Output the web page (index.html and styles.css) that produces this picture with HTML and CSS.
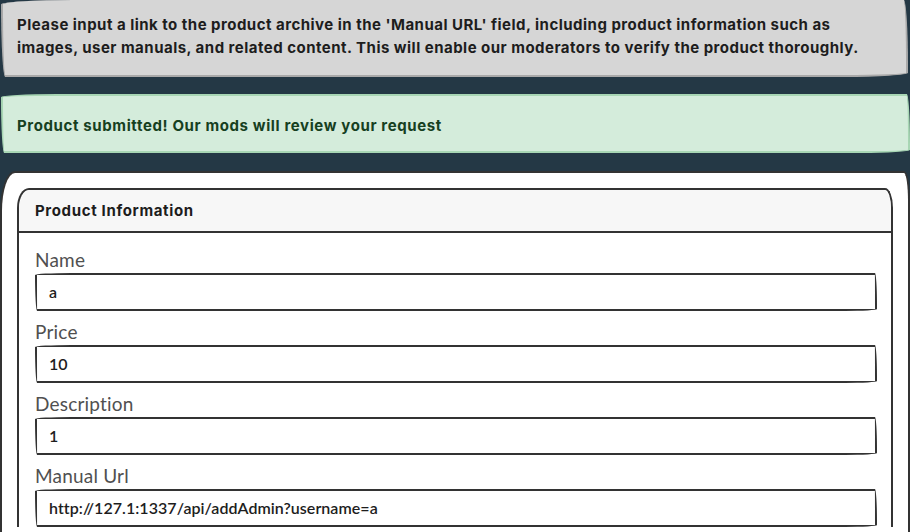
FILE: index.html
```html
<!DOCTYPE html>
<html>
<head>
<meta charset="utf-8">
<link rel="stylesheet" href="styles.css">
</head>
<body>
  <div class="alert alert-info">Please input a link to the product archive in the 'Manual URL' field, including product information such as images, user manuals, and related content. This will enable our moderators to verify the product thoroughly.</div>
  <div class="alert alert-success">Product submitted! Our mods will review your request</div>
  <div class="paper">
    <div class="card">
      <div class="card-header">Product Information</div>
      <div class="card-body">
        <label class="label">Name</label>
        <div class="input">a</div>
        <label class="label">Price</label>
        <div class="input">10</div>
        <label class="label">Description</label>
        <div class="input">1</div>
        <label class="label">Manual Url</label>
        <div class="input">http://127.1:1337/api/addAdmin?username=a</div>
      </div>
    </div>
  </div>
</body>
</html>
```

FILE: styles.css
```css
html, body {
  margin: 0;
  padding: 0;
  background: #243845;
  height: 100%;
  overflow: hidden;
}
body {
  font-family: "Inter", "DejaVu Sans", sans-serif;
}
.alert {
  font-weight: 700;
  font-size: 15px;
  line-height: 23px;
  letter-spacing: 0.48px;
  color: #1d1d1d;
  border-radius: 255px 15px 225px 15px / 15px 225px 15px 255px;
}
.alert-info {
  background: #d6d6d6;
  border: 2px solid #a9a9a9;
  border-top: none;
  margin: 0 2px 0 1px;
  padding: 13px 32px 16px 14px;
}
.alert-success {
  background: #d4ecdb;
  border: 2px solid #a8d6b4;
  color: #16401f;
  letter-spacing: 0.62px;
  margin: 17px 0 0 1px;
  padding: 18px 16px 14px 14px;
}
.paper {
  background: #fff;
  margin-top: 18px;
  border: 2px solid #333;
  border-bottom: none;
  border-radius: 15px 6px 0 0 / 40px 30px 0 0;
  padding: 15px 15px 0 15px;
  height: 400px;
}
.card {
  border: 2px solid #333;
  border-bottom: none;
  border-radius: 12px 8px 0 0 / 20px 20px 0 0;
}
.card-header {
  background: #f7f7f7;
  border-bottom: 2px solid #333;
  border-radius: 12px 8px 0 0 / 20px 20px 0 0;
  padding: 9px 16px 9px 16px;
  font-weight: 700;
  font-size: 15px;
  line-height: 23px;
  letter-spacing: 0.65px;
  color: #1d1d1d;
}
.card-body {
  padding: 14px 14px 0 16px;
}
.label {
  display: block;
  font-family: "Lato", sans-serif;
  font-size: 19px;
  line-height: 26px;
  letter-spacing: 0.2px;
  color: #505050;
}
.input {
  box-sizing: border-box;
  height: 38px;
  border: 2px solid #333;
  border-radius: 255px 15px 225px 15px / 15px 225px 15px 255px;
  padding: 0 12px;
  font-family: "Lato", sans-serif;
  font-weight: 600;
  font-size: 16px;
  line-height: 34px;
  letter-spacing: 0.05px;
  color: #1d1d1d;
  margin-bottom: 8px;
}
```
